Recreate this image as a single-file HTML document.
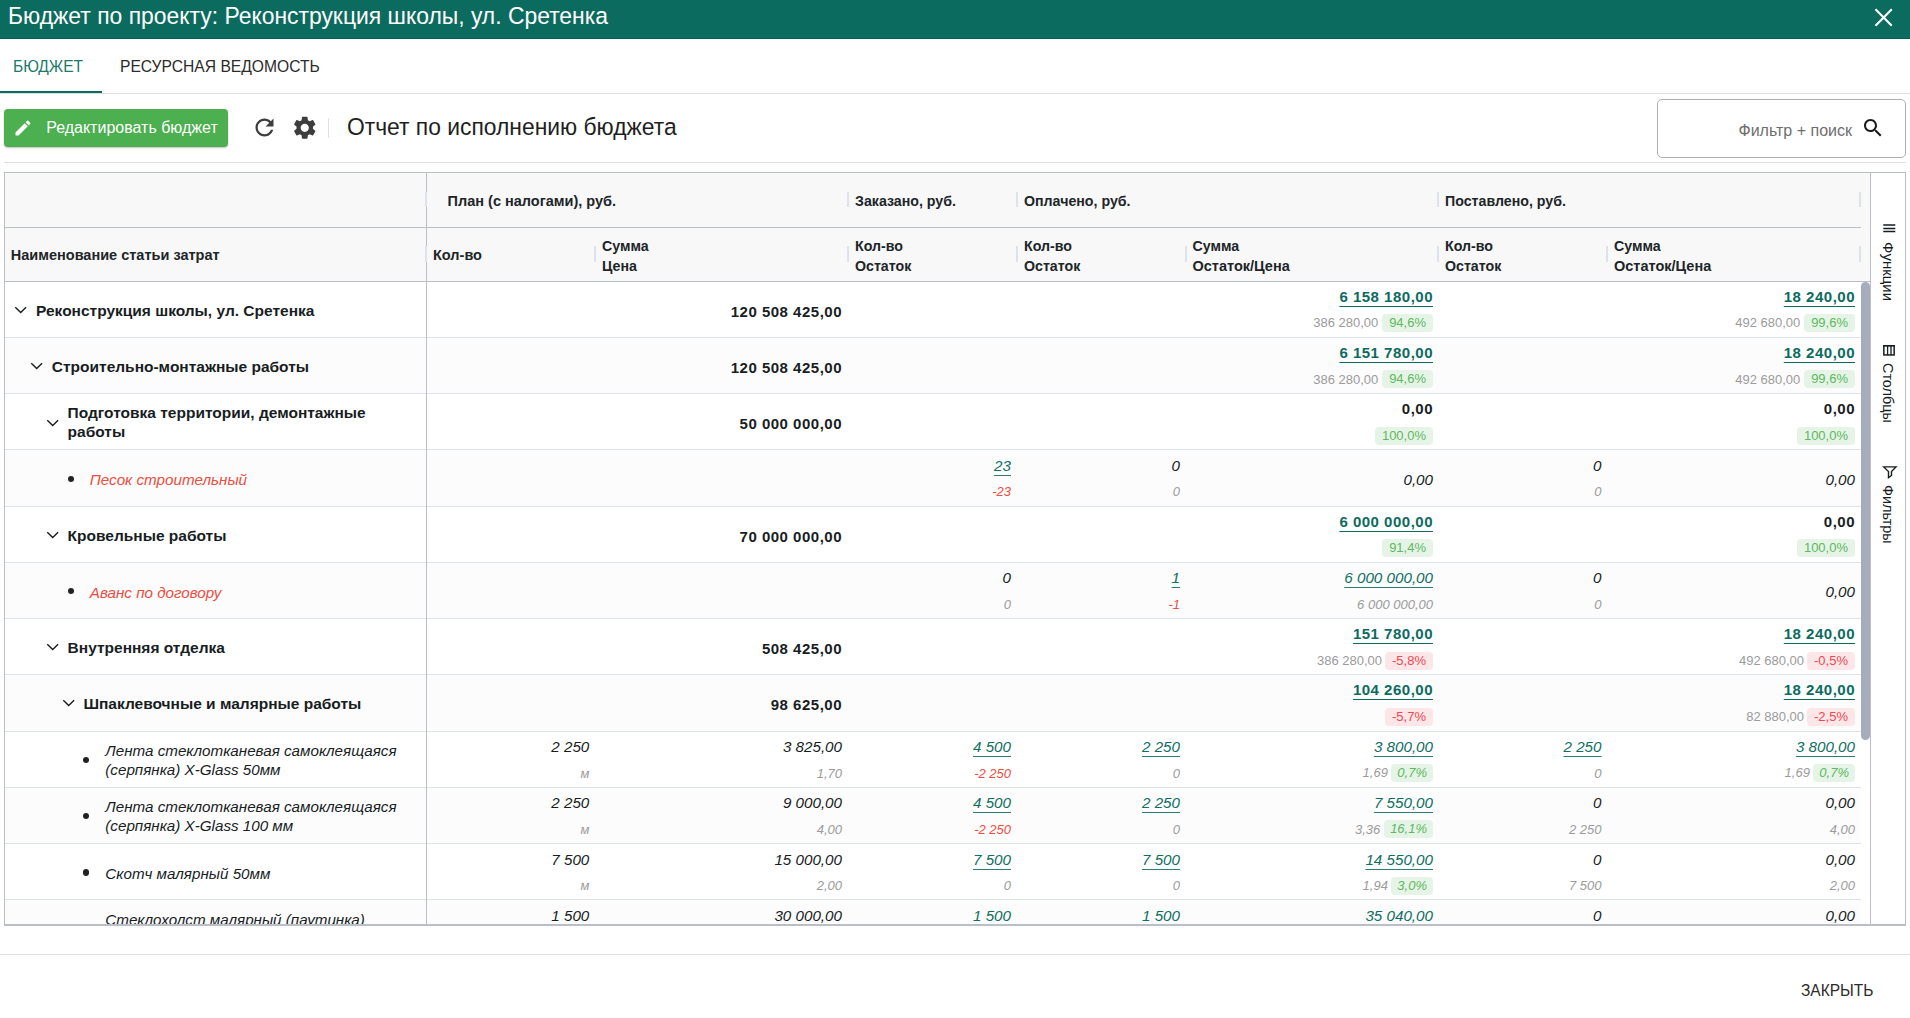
<!DOCTYPE html>
<html><head><meta charset="utf-8"><style>
html,body{margin:0;padding:0;background:#fff;width:1910px;height:1018px;overflow:hidden;position:relative;font-family:"Liberation Sans", sans-serif}
body>div,#tbl>div{position:absolute}
.t{white-space:nowrap}
</style></head><body>
<div style="left:0px;top:0px;width:1910px;height:38px;background:#0c6b5f"></div>
<div style="left:0px;top:38px;width:1910px;height:1px;background:#045f53"></div>
<div class="t" style="left:8px;top:1.48px;font-size:24.3px;line-height:30px;color:#fff;transform:scaleX(0.942);transform-origin:0 0">Бюджет по проекту: Реконструкция школы, ул. Сретенка</div>
<svg style="position:absolute;left:1872px;top:6px" width="23" height="23" viewBox="0 0 23 23"><path d="M3.5 3.2 L19.8 19.8 M19.8 3.2 L3.5 19.8" stroke="#fff" stroke-width="2.1" fill="none"/></svg>
<div class="t" style="left:13.2px;top:56.28px;font-size:16.5px;line-height:20px;color:#1b7a6c;transform:scaleX(0.943);transform-origin:0 0">БЮДЖЕТ</div>
<div class="t" style="left:119.5px;top:56.28px;font-size:16.5px;line-height:20px;color:#2b2b2b;transform:scaleX(0.947);transform-origin:0 0">РЕСУРСНАЯ ВЕДОМОСТЬ</div>
<div style="left:0px;top:93px;width:1910px;height:1px;background:#e0e0e0"></div>
<div style="left:0px;top:91px;width:102px;height:2px;background:#0c6b5f"></div>
<div style="left:4px;top:109px;width:224px;height:38px;background:#4caf50;border-radius:4px;box-shadow:0 1px 2px rgba(0,0,0,0.25)"></div>
<svg style="position:absolute;left:12.9px;top:117.6px" width="20" height="20" viewBox="0 0 24 24"><path fill="#fff" d="M3 17.25V21h3.75L17.81 9.94l-3.75-3.75L3 17.25zM20.71 7.04c.39-.39.39-1.02 0-1.41l-2.34-2.34c-.39-.39-1.02-.39-1.41 0l-1.83 1.83 3.75 3.75 1.83-1.83z"/></svg>
<div class="t" style="left:46.2px;top:118.26px;font-size:16px;line-height:20px;color:#fff">Редактировать бюджет</div>
<svg style="position:absolute;left:250.8px;top:113.6px" width="27" height="27" viewBox="0 0 24 24"><path fill="#3d3d3d" d="M17.65 6.35C16.2 4.9 14.21 4 12 4c-4.42 0-7.99 3.58-7.99 8s3.57 8 7.99 8c3.73 0 6.84-2.55 7.73-6h-2.08c-.82 2.33-3.04 4-5.65 4-3.31 0-6-2.69-6-6s2.69-6 6-6c1.66 0 3.14.69 4.22 1.78L13 11h7V4l-2.35 2.35z"/></svg>
<svg style="position:absolute;left:290.75px;top:113.65px" width="27.5" height="27.5" viewBox="0 0 24 24"><path fill="#3d3d3d" d="M19.14 12.94c.04-.3.06-.61.06-.94 0-.32-.02-.64-.07-.94l2.03-1.58c.18-.14.23-.41.12-.61l-1.92-3.32c-.12-.22-.37-.29-.59-.22l-2.39.96c-.5-.38-1.03-.7-1.62-.94l-.36-2.54c-.04-.24-.24-.41-.48-.41h-3.84c-.24 0-.43.17-.47.41l-.36 2.54c-.59.24-1.13.57-1.62.94l-2.39-.96c-.22-.08-.47 0-.59.22L2.74 8.87c-.12.21-.08.47.12.61l2.03 1.58c-.05.3-.09.63-.09.94s.02.64.07.94l-2.03 1.58c-.18.14-.23.41-.12.61l1.92 3.32c.12.22.37.29.59.22l2.39-.96c.5.38 1.03.7 1.62.94l.36 2.54c.05.24.24.41.48.41h3.84c.24 0 .44-.17.47-.41l.36-2.54c.59-.24 1.13-.56 1.62-.94l2.39.96c.22.08.47 0 .59-.22l1.92-3.32c.12-.22.07-.47-.12-.61l-2.01-1.58zM12 15.6c-1.98 0-3.6-1.62-3.6-3.6s1.62-3.6 3.6-3.6 3.6 1.62 3.6 3.6-1.62 3.6-3.6 3.6z"/></svg>
<div style="left:328px;top:118px;width:1px;height:20px;background:#e0e0e0"></div>
<div class="t" style="left:347px;top:111.88px;font-size:24.3px;line-height:30px;color:#1f1f1f;transform:scaleX(0.94);transform-origin:0 0">Отчет по исполнению бюджета</div>
<div style="left:1657px;top:99px;width:247px;height:57px;border:1px solid #b0b0b0;border-radius:5px;background:#fff"></div>
<div class="t" style="right:58px;top:121.26px;font-size:16px;line-height:20px;text-align:right;color:#6e6e6e">Фильтр + поиск</div>
<svg style="position:absolute;left:1861px;top:116px" width="24" height="24" viewBox="0 0 24 24"><path fill="#1a1a1a" d="M15.5 14h-.79l-.28-.27C15.41 12.59 16 11.11 16 9.5 16 5.91 13.09 3 9.5 3S3 5.91 3 9.5 5.91 16 9.5 16c1.61 0 3.09-.59 4.23-1.57l.27.28v.79l5 4.99L20.49 19l-4.99-5zm-6 0C7.01 14 5 11.99 5 9.5S7.01 5 9.5 5 14 7.01 14 9.5 11.99 14 9.5 14z"/></svg>
<div style="left:4px;top:162px;width:1902px;height:1px;background:#e0e0e0"></div>
<div style="left:4px;top:172px;width:1902px;height:754px;background:#fff"></div>
<div style="left:4px;top:172px;width:1866px;height:109px;background:#f8f8f8"></div>
<div style="left:5px;top:281.50px;width:1856px;height:56.25px;background:#ffffff"></div>
<div style="left:5px;top:336.75px;width:1856px;height:1px;background:#dde2eb"></div>
<div style="left:5px;top:337.75px;width:1856px;height:56.25px;background:#fcfcfc"></div>
<div style="left:5px;top:393.00px;width:1856px;height:1px;background:#dde2eb"></div>
<div style="left:5px;top:394.00px;width:1856px;height:56.25px;background:#ffffff"></div>
<div style="left:5px;top:449.25px;width:1856px;height:1px;background:#dde2eb"></div>
<div style="left:5px;top:450.25px;width:1856px;height:56.25px;background:#fcfcfc"></div>
<div style="left:5px;top:505.50px;width:1856px;height:1px;background:#dde2eb"></div>
<div style="left:5px;top:506.50px;width:1856px;height:56.25px;background:#ffffff"></div>
<div style="left:5px;top:561.75px;width:1856px;height:1px;background:#dde2eb"></div>
<div style="left:5px;top:562.75px;width:1856px;height:56.25px;background:#fcfcfc"></div>
<div style="left:5px;top:618.00px;width:1856px;height:1px;background:#dde2eb"></div>
<div style="left:5px;top:619.00px;width:1856px;height:56.25px;background:#ffffff"></div>
<div style="left:5px;top:674.25px;width:1856px;height:1px;background:#dde2eb"></div>
<div style="left:5px;top:675.25px;width:1856px;height:56.25px;background:#fcfcfc"></div>
<div style="left:5px;top:730.50px;width:1856px;height:1px;background:#dde2eb"></div>
<div style="left:5px;top:731.50px;width:1856px;height:56.25px;background:#ffffff"></div>
<div style="left:5px;top:786.75px;width:1856px;height:1px;background:#dde2eb"></div>
<div style="left:5px;top:787.75px;width:1856px;height:56.25px;background:#fcfcfc"></div>
<div style="left:5px;top:843.00px;width:1856px;height:1px;background:#dde2eb"></div>
<div style="left:5px;top:844.00px;width:1856px;height:56.25px;background:#ffffff"></div>
<div style="left:5px;top:899.25px;width:1856px;height:1px;background:#dde2eb"></div>
<div style="left:5px;top:900.25px;width:1856px;height:23.75px;background:#fcfcfc"></div>
<div style="left:4px;top:227px;width:1857px;height:1px;background:#babfc7"></div>
<div style="left:4px;top:281px;width:1866px;height:1px;background:#babfc7"></div>
<div style="left:426px;top:172px;width:1px;height:754px;background:#babfc7"></div>
<div style="left:4px;top:172px;width:1902px;height:1px;background:#babfc7"></div>
<div style="left:4px;top:172px;width:1px;height:754px;background:#babfc7"></div>
<div style="left:1905px;top:172px;width:1px;height:754px;background:#babfc7"></div>
<div style="left:4px;top:924px;width:1902px;height:2px;background:#babfc7"></div>
<div style="left:1870px;top:172px;width:1px;height:754px;background:#babfc7"></div>
<div style="left:1861px;top:282px;width:9px;height:458px;background:#a5adbd;border-radius:5px 5px 5px 5px"></div>
<div style="left:424.5px;top:192px;width:2px;height:15px;background:#dde2eb"></div>
<div style="left:847px;top:192px;width:2px;height:15px;background:#dde2eb"></div>
<div style="left:1016px;top:192px;width:2px;height:15px;background:#dde2eb"></div>
<div style="left:1437px;top:192px;width:2px;height:15px;background:#dde2eb"></div>
<div style="left:1859px;top:192px;width:2px;height:15px;background:#dde2eb"></div>
<div style="left:424.5px;top:246px;width:2px;height:16px;background:#dde2eb"></div>
<div style="left:594px;top:246px;width:2px;height:16px;background:#dde2eb"></div>
<div style="left:847px;top:246px;width:2px;height:16px;background:#dde2eb"></div>
<div style="left:1016px;top:246px;width:2px;height:16px;background:#dde2eb"></div>
<div style="left:1185px;top:246px;width:2px;height:16px;background:#dde2eb"></div>
<div style="left:1437px;top:246px;width:2px;height:16px;background:#dde2eb"></div>
<div style="left:1606px;top:246px;width:2px;height:16px;background:#dde2eb"></div>
<div style="left:1859px;top:246px;width:2px;height:16px;background:#dde2eb"></div>
<div class="t" style="left:447.6px;top:190.88px;font-size:14.5px;line-height:20px;font-weight:bold;color:#202528">План (с налогами), руб.</div>
<div class="t" style="left:855px;top:190.98px;font-size:14.2px;line-height:20px;font-weight:bold;color:#202528">Заказано, руб.</div>
<div class="t" style="left:1024px;top:190.98px;font-size:14.2px;line-height:20px;font-weight:bold;color:#202528">Оплачено, руб.</div>
<div class="t" style="left:1445px;top:190.98px;font-size:14.2px;line-height:20px;font-weight:bold;color:#202528">Поставлено, руб.</div>
<div class="t" style="left:10.8px;top:244.78px;font-size:14.5px;line-height:20px;font-weight:bold;color:#202528">Наименование статьи затрат</div>
<div class="t" style="left:433px;top:244.58px;font-size:14.5px;line-height:20px;font-weight:bold;color:#202528">Кол-во</div>
<div class="t" style="left:602px;top:235.68px;font-size:14.2px;line-height:20px;font-weight:bold;color:#202528">Сумма</div>
<div class="t" style="left:602px;top:255.68px;font-size:14.2px;line-height:20px;font-weight:bold;color:#202528">Цена</div>
<div class="t" style="left:855px;top:235.68px;font-size:14.2px;line-height:20px;font-weight:bold;color:#202528">Кол-во</div>
<div class="t" style="left:855px;top:255.68px;font-size:14.2px;line-height:20px;font-weight:bold;color:#202528">Остаток</div>
<div class="t" style="left:1024px;top:235.68px;font-size:14.2px;line-height:20px;font-weight:bold;color:#202528">Кол-во</div>
<div class="t" style="left:1024px;top:255.68px;font-size:14.2px;line-height:20px;font-weight:bold;color:#202528">Остаток</div>
<div class="t" style="left:1192.5px;top:235.68px;font-size:14.2px;line-height:20px;font-weight:bold;color:#202528">Сумма</div>
<div class="t" style="left:1192.5px;top:255.58px;font-size:14.5px;line-height:20px;font-weight:bold;color:#202528">Остаток/Цена</div>
<div class="t" style="left:1445px;top:235.68px;font-size:14.2px;line-height:20px;font-weight:bold;color:#202528">Кол-во</div>
<div class="t" style="left:1445px;top:255.68px;font-size:14.2px;line-height:20px;font-weight:bold;color:#202528">Остаток</div>
<div class="t" style="left:1614px;top:235.68px;font-size:14.2px;line-height:20px;font-weight:bold;color:#202528">Сумма</div>
<div class="t" style="left:1614px;top:255.58px;font-size:14.5px;line-height:20px;font-weight:bold;color:#202528">Остаток/Цена</div>
<div class="t" style="left:1876px;top:242px;writing-mode:vertical-rl;font-size:15px;line-height:24px;color:#181d1f">Функции</div>
<svg style="position:absolute;left:1882px;top:222px" width="14" height="12" viewBox="0 0 14 12"><path d="M1.3 3H13.3M1.3 6.5H13.3M1.3 9.6H13.3" stroke="#181d1f" stroke-width="1.5"/></svg>
<div class="t" style="left:1876px;top:363px;writing-mode:vertical-rl;font-size:14.4px;line-height:24px;color:#181d1f">Столбцы</div>
<svg style="position:absolute;left:1882px;top:344px" width="14" height="13" viewBox="0 0 14 13"><rect x="1.85" y="1.85" width="10.3" height="9.1" fill="none" stroke="#181d1f" stroke-width="1.5"/><path d="M1.1 1.6H12.9" stroke="#181d1f" stroke-width="1"/><path d="M5.6 2V11M9 2V11" stroke="#181d1f" stroke-width="1.3"/></svg>
<div class="t" style="left:1876px;top:485px;writing-mode:vertical-rl;font-size:14.4px;line-height:24px;color:#181d1f">Фильтры</div>
<svg style="position:absolute;left:1882px;top:465px" width="16" height="14" viewBox="0 0 16 14"><path d="M1.6 1.9 L14 1.9 L9.5 6.5 L9.5 10.5 L6.5 12.6 L6.5 6.5 Z" fill="none" stroke="#181d1f" stroke-width="1.4" stroke-linejoin="miter"/></svg>
<div style="left:0px;top:954px;width:1910px;height:1px;background:#e0e0e0"></div>
<div class="t" style="left:1801px;top:981.36px;font-size:16px;line-height:20px;color:#2b2b2b;transform:scaleX(0.97);transform-origin:0 0">ЗАКРЫТЬ</div>
<svg style="position:absolute;left:14.3px;top:304.50px" width="14" height="10" viewBox="0 0 14 10"><path d="M1.3 2.2 L6.7 7.6 L12.1 2.2" stroke="#181d1f" stroke-width="1.4" fill="none"/></svg>
<div class="t" style="left:36.0px;top:300.73px;font-size:15.5px;line-height:20px;font-weight:bold;color:#181d1f">Реконструкция школы, ул. Сретенка</div>
<div class="t" style="right:1068px;top:301.60px;font-size:15px;line-height:20px;text-align:right;font-weight:bold;letter-spacing:0.5px;color:#181d1f">120 508 425,00</div>
<div class="t" style="right:477px;top:286.70px;font-size:15px;line-height:20px;text-align:right;font-weight:bold;letter-spacing:0.5px;"><span style="color:#0c6b5f;text-decoration:underline;text-decoration-color:#0c6b5f;text-underline-offset:4px;text-decoration-thickness:1px">6 158 180,00</span></div>
<div class="t" style="right:477px;top:314.00px;height:18px;line-height:18px;padding:0 7px;border-radius:4px;background:#e6f4e7;color:#5db860;font-size:13px;">94,6%</div>
<div class="t" style="right:531.7px;top:313.30px;font-size:13px;line-height:20px;text-align:right;color:#9b9b9b">386 280,00</div>
<div class="t" style="right:55px;top:286.70px;font-size:15px;line-height:20px;text-align:right;font-weight:bold;letter-spacing:0.5px;"><span style="color:#0c6b5f;text-decoration:underline;text-decoration-color:#0c6b5f;text-underline-offset:4px;text-decoration-thickness:1px">18 240,00</span></div>
<div class="t" style="right:55px;top:314.00px;height:18px;line-height:18px;padding:0 7px;border-radius:4px;background:#e6f4e7;color:#5db860;font-size:13px;">99,6%</div>
<div class="t" style="right:109.70000000000005px;top:313.30px;font-size:13px;line-height:20px;text-align:right;color:#9b9b9b">492 680,00</div>
<svg style="position:absolute;left:30.3px;top:360.75px" width="14" height="10" viewBox="0 0 14 10"><path d="M1.3 2.2 L6.7 7.6 L12.1 2.2" stroke="#181d1f" stroke-width="1.4" fill="none"/></svg>
<div class="t" style="left:51.8px;top:356.98px;font-size:15.5px;line-height:20px;font-weight:bold;color:#181d1f">Строительно-монтажные работы</div>
<div class="t" style="right:1068px;top:357.85px;font-size:15px;line-height:20px;text-align:right;font-weight:bold;letter-spacing:0.5px;color:#181d1f">120 508 425,00</div>
<div class="t" style="right:477px;top:342.95px;font-size:15px;line-height:20px;text-align:right;font-weight:bold;letter-spacing:0.5px;"><span style="color:#0c6b5f;text-decoration:underline;text-decoration-color:#0c6b5f;text-underline-offset:4px;text-decoration-thickness:1px">6 151 780,00</span></div>
<div class="t" style="right:477px;top:370.25px;height:18px;line-height:18px;padding:0 7px;border-radius:4px;background:#e6f4e7;color:#5db860;font-size:13px;">94,6%</div>
<div class="t" style="right:531.7px;top:369.55px;font-size:13px;line-height:20px;text-align:right;color:#9b9b9b">386 280,00</div>
<div class="t" style="right:55px;top:342.95px;font-size:15px;line-height:20px;text-align:right;font-weight:bold;letter-spacing:0.5px;"><span style="color:#0c6b5f;text-decoration:underline;text-decoration-color:#0c6b5f;text-underline-offset:4px;text-decoration-thickness:1px">18 240,00</span></div>
<div class="t" style="right:55px;top:370.25px;height:18px;line-height:18px;padding:0 7px;border-radius:4px;background:#e6f4e7;color:#5db860;font-size:13px;">99,6%</div>
<div class="t" style="right:109.70000000000005px;top:369.55px;font-size:13px;line-height:20px;text-align:right;color:#9b9b9b">492 680,00</div>
<svg style="position:absolute;left:46.3px;top:417.80px" width="14" height="10" viewBox="0 0 14 10"><path d="M1.3 2.2 L6.7 7.6 L12.1 2.2" stroke="#181d1f" stroke-width="1.4" fill="none"/></svg>
<div class="t" style="left:67.6px;top:403.23px;font-size:15.5px;line-height:20px;font-weight:bold;color:#181d1f">Подготовка территории, демонтажные</div>
<div class="t" style="left:67.6px;top:422.13px;font-size:15.5px;line-height:20px;font-weight:bold;color:#181d1f">работы</div>
<div class="t" style="right:1068px;top:414.10px;font-size:15px;line-height:20px;text-align:right;font-weight:bold;letter-spacing:0.5px;color:#181d1f">50 000 000,00</div>
<div class="t" style="right:477px;top:399.20px;font-size:15px;line-height:20px;text-align:right;font-weight:bold;letter-spacing:0.5px;color:#181d1f">0,00</div>
<div class="t" style="right:477px;top:426.50px;height:18px;line-height:18px;padding:0 7px;border-radius:4px;background:#e6f4e7;color:#5db860;font-size:13px;">100,0%</div>
<div class="t" style="right:55px;top:399.20px;font-size:15px;line-height:20px;text-align:right;font-weight:bold;letter-spacing:0.5px;color:#181d1f">0,00</div>
<div class="t" style="right:55px;top:426.50px;height:18px;line-height:18px;padding:0 7px;border-radius:4px;background:#e6f4e7;color:#5db860;font-size:13px;">100,0%</div>
<div style="left:67.50px;top:475.55px;width:6.4px;height:6.4px;border-radius:50%;background:#222"></div>
<div class="t" style="left:89.8px;top:470.08px;font-size:15.2px;line-height:20px;font-style:italic;color:#ee4c40">Песок строительный</div>
<div class="t" style="right:899px;top:455.78px;font-size:15.2px;line-height:20px;text-align:right;font-style:italic"><span style="color:#0f6f63;text-decoration:underline;text-decoration-color:#2a7d72;text-underline-offset:4px;text-decoration-thickness:1px">23</span></div>
<div class="t" style="right:899px;top:482.35px;font-size:13px;line-height:20px;text-align:right;font-style:italic;color:#ee4c40">-23</div>
<div class="t" style="right:730px;top:455.78px;font-size:15.2px;line-height:20px;text-align:right;font-style:italic;color:#181d1f">0</div>
<div class="t" style="right:730px;top:482.35px;font-size:13px;line-height:20px;text-align:right;font-style:italic;color:#9b9b9b">0</div>
<div class="t" style="right:477px;top:469.58px;font-size:15.2px;line-height:20px;text-align:right;font-style:italic;color:#181d1f">0,00</div>
<div class="t" style="right:308.5px;top:455.78px;font-size:15.2px;line-height:20px;text-align:right;font-style:italic;color:#181d1f">0</div>
<div class="t" style="right:308.5px;top:482.35px;font-size:13px;line-height:20px;text-align:right;font-style:italic;color:#9b9b9b">0</div>
<div class="t" style="right:55px;top:469.58px;font-size:15.2px;line-height:20px;text-align:right;font-style:italic;color:#181d1f">0,00</div>
<svg style="position:absolute;left:46.3px;top:529.50px" width="14" height="10" viewBox="0 0 14 10"><path d="M1.3 2.2 L6.7 7.6 L12.1 2.2" stroke="#181d1f" stroke-width="1.4" fill="none"/></svg>
<div class="t" style="left:67.6px;top:525.73px;font-size:15.5px;line-height:20px;font-weight:bold;color:#181d1f">Кровельные работы</div>
<div class="t" style="right:1068px;top:526.60px;font-size:15px;line-height:20px;text-align:right;font-weight:bold;letter-spacing:0.5px;color:#181d1f">70 000 000,00</div>
<div class="t" style="right:477px;top:511.70px;font-size:15px;line-height:20px;text-align:right;font-weight:bold;letter-spacing:0.5px;"><span style="color:#0c6b5f;text-decoration:underline;text-decoration-color:#0c6b5f;text-underline-offset:4px;text-decoration-thickness:1px">6 000 000,00</span></div>
<div class="t" style="right:477px;top:539.00px;height:18px;line-height:18px;padding:0 7px;border-radius:4px;background:#e6f4e7;color:#5db860;font-size:13px;">91,4%</div>
<div class="t" style="right:55px;top:511.70px;font-size:15px;line-height:20px;text-align:right;font-weight:bold;letter-spacing:0.5px;color:#181d1f">0,00</div>
<div class="t" style="right:55px;top:539.00px;height:18px;line-height:18px;padding:0 7px;border-radius:4px;background:#e6f4e7;color:#5db860;font-size:13px;">100,0%</div>
<div style="left:67.50px;top:588.05px;width:6.4px;height:6.4px;border-radius:50%;background:#222"></div>
<div class="t" style="left:89.8px;top:582.58px;font-size:15.2px;line-height:20px;font-style:italic;color:#ee4c40">Аванс по договору</div>
<div class="t" style="right:899px;top:568.28px;font-size:15.2px;line-height:20px;text-align:right;font-style:italic;color:#181d1f">0</div>
<div class="t" style="right:899px;top:594.85px;font-size:13px;line-height:20px;text-align:right;font-style:italic;color:#9b9b9b">0</div>
<div class="t" style="right:730px;top:568.28px;font-size:15.2px;line-height:20px;text-align:right;font-style:italic"><span style="color:#0f6f63;text-decoration:underline;text-decoration-color:#2a7d72;text-underline-offset:4px;text-decoration-thickness:1px">1</span></div>
<div class="t" style="right:730px;top:594.85px;font-size:13px;line-height:20px;text-align:right;font-style:italic;color:#ee4c40">-1</div>
<div class="t" style="right:477px;top:568.28px;font-size:15.2px;line-height:20px;text-align:right;font-style:italic"><span style="color:#0f6f63;text-decoration:underline;text-decoration-color:#2a7d72;text-underline-offset:4px;text-decoration-thickness:1px">6 000 000,00</span></div>
<div class="t" style="right:477px;top:594.85px;font-size:13px;line-height:20px;text-align:right;font-style:italic;color:#9b9b9b">6 000 000,00</div>
<div class="t" style="right:308.5px;top:568.28px;font-size:15.2px;line-height:20px;text-align:right;font-style:italic;color:#181d1f">0</div>
<div class="t" style="right:308.5px;top:594.85px;font-size:13px;line-height:20px;text-align:right;font-style:italic;color:#9b9b9b">0</div>
<div class="t" style="right:55px;top:582.08px;font-size:15.2px;line-height:20px;text-align:right;font-style:italic;color:#181d1f">0,00</div>
<svg style="position:absolute;left:46.3px;top:642.00px" width="14" height="10" viewBox="0 0 14 10"><path d="M1.3 2.2 L6.7 7.6 L12.1 2.2" stroke="#181d1f" stroke-width="1.4" fill="none"/></svg>
<div class="t" style="left:67.6px;top:638.23px;font-size:15.5px;line-height:20px;font-weight:bold;color:#181d1f">Внутренняя отделка</div>
<div class="t" style="right:1068px;top:639.10px;font-size:15px;line-height:20px;text-align:right;font-weight:bold;letter-spacing:0.5px;color:#181d1f">508 425,00</div>
<div class="t" style="right:477px;top:624.20px;font-size:15px;line-height:20px;text-align:right;font-weight:bold;letter-spacing:0.5px;"><span style="color:#0c6b5f;text-decoration:underline;text-decoration-color:#0c6b5f;text-underline-offset:4px;text-decoration-thickness:1px">151 780,00</span></div>
<div class="t" style="right:477px;top:651.50px;height:18px;line-height:18px;padding:0 7px;border-radius:4px;background:#fde6e8;color:#ee4a50;font-size:13px;">-5,8%</div>
<div class="t" style="right:528.0px;top:650.80px;font-size:13px;line-height:20px;text-align:right;color:#9b9b9b">386 280,00</div>
<div class="t" style="right:55px;top:624.20px;font-size:15px;line-height:20px;text-align:right;font-weight:bold;letter-spacing:0.5px;"><span style="color:#0c6b5f;text-decoration:underline;text-decoration-color:#0c6b5f;text-underline-offset:4px;text-decoration-thickness:1px">18 240,00</span></div>
<div class="t" style="right:55px;top:651.50px;height:18px;line-height:18px;padding:0 7px;border-radius:4px;background:#fde6e8;color:#ee4a50;font-size:13px;">-0,5%</div>
<div class="t" style="right:106.0px;top:650.80px;font-size:13px;line-height:20px;text-align:right;color:#9b9b9b">492 680,00</div>
<svg style="position:absolute;left:62.3px;top:698.25px" width="14" height="10" viewBox="0 0 14 10"><path d="M1.3 2.2 L6.7 7.6 L12.1 2.2" stroke="#181d1f" stroke-width="1.4" fill="none"/></svg>
<div class="t" style="left:83.4px;top:694.48px;font-size:15.5px;line-height:20px;font-weight:bold;color:#181d1f">Шпаклевочные и малярные работы</div>
<div class="t" style="right:1068px;top:695.35px;font-size:15px;line-height:20px;text-align:right;font-weight:bold;letter-spacing:0.5px;color:#181d1f">98 625,00</div>
<div class="t" style="right:477px;top:680.45px;font-size:15px;line-height:20px;text-align:right;font-weight:bold;letter-spacing:0.5px;"><span style="color:#0c6b5f;text-decoration:underline;text-decoration-color:#0c6b5f;text-underline-offset:4px;text-decoration-thickness:1px">104 260,00</span></div>
<div class="t" style="right:477px;top:707.75px;height:18px;line-height:18px;padding:0 7px;border-radius:4px;background:#fde6e8;color:#ee4a50;font-size:13px;">-5,7%</div>
<div class="t" style="right:55px;top:680.45px;font-size:15px;line-height:20px;text-align:right;font-weight:bold;letter-spacing:0.5px;"><span style="color:#0c6b5f;text-decoration:underline;text-decoration-color:#0c6b5f;text-underline-offset:4px;text-decoration-thickness:1px">18 240,00</span></div>
<div class="t" style="right:55px;top:707.75px;height:18px;line-height:18px;padding:0 7px;border-radius:4px;background:#fde6e8;color:#ee4a50;font-size:13px;">-2,5%</div>
<div class="t" style="right:106.0px;top:707.05px;font-size:13px;line-height:20px;text-align:right;color:#9b9b9b">82 880,00</div>
<div style="left:83.10px;top:756.80px;width:6.4px;height:6.4px;border-radius:50%;background:#222"></div>
<div class="t" style="left:105.3px;top:741.23px;font-size:15.2px;line-height:20px;font-style:italic;color:#181d1f">Лента стеклотканевая самоклеящаяся</div>
<div class="t" style="left:105.3px;top:760.13px;font-size:15.2px;line-height:20px;font-style:italic;color:#181d1f">(серпянка) X-Glass 50мм</div>
<div class="t" style="right:1320.7px;top:737.03px;font-size:15.2px;line-height:20px;text-align:right;font-style:italic;color:#181d1f">2 250</div>
<div class="t" style="right:1320.7px;top:763.60px;font-size:13px;line-height:20px;text-align:right;font-style:italic;color:#9b9b9b">м</div>
<div class="t" style="right:1068px;top:737.03px;font-size:15.2px;line-height:20px;text-align:right;font-style:italic;color:#181d1f">3 825,00</div>
<div class="t" style="right:1068px;top:763.60px;font-size:13px;line-height:20px;text-align:right;font-style:italic;color:#9b9b9b">1,70</div>
<div class="t" style="right:899px;top:737.03px;font-size:15.2px;line-height:20px;text-align:right;font-style:italic"><span style="color:#0f6f63;text-decoration:underline;text-decoration-color:#2a7d72;text-underline-offset:4px;text-decoration-thickness:1px">4 500</span></div>
<div class="t" style="right:899px;top:763.60px;font-size:13px;line-height:20px;text-align:right;font-style:italic;color:#ee4c40">-2 250</div>
<div class="t" style="right:730px;top:737.03px;font-size:15.2px;line-height:20px;text-align:right;font-style:italic"><span style="color:#0f6f63;text-decoration:underline;text-decoration-color:#2a7d72;text-underline-offset:4px;text-decoration-thickness:1px">2 250</span></div>
<div class="t" style="right:730px;top:763.60px;font-size:13px;line-height:20px;text-align:right;font-style:italic;color:#9b9b9b">0</div>
<div class="t" style="right:477px;top:737.03px;font-size:15.2px;line-height:20px;text-align:right;font-style:italic"><span style="color:#0f6f63;text-decoration:underline;text-decoration-color:#2a7d72;text-underline-offset:4px;text-decoration-thickness:1px">3 800,00</span></div>
<div class="t" style="right:477px;top:764.00px;height:18px;line-height:18px;padding:0 6px;border-radius:4px;background:#e6f4e7;color:#5db860;font-size:13px;font-style:italic;">0,7%</div>
<div class="t" style="right:522.0999999999999px;top:763.30px;font-size:13px;line-height:20px;text-align:right;font-style:italic;color:#9b9b9b">1,69</div>
<div class="t" style="right:308.5px;top:737.03px;font-size:15.2px;line-height:20px;text-align:right;font-style:italic"><span style="color:#0f6f63;text-decoration:underline;text-decoration-color:#2a7d72;text-underline-offset:4px;text-decoration-thickness:1px">2 250</span></div>
<div class="t" style="right:308.5px;top:763.60px;font-size:13px;line-height:20px;text-align:right;font-style:italic;color:#9b9b9b">0</div>
<div class="t" style="right:55px;top:737.03px;font-size:15.2px;line-height:20px;text-align:right;font-style:italic"><span style="color:#0f6f63;text-decoration:underline;text-decoration-color:#2a7d72;text-underline-offset:4px;text-decoration-thickness:1px">3 800,00</span></div>
<div class="t" style="right:55px;top:764.00px;height:18px;line-height:18px;padding:0 6px;border-radius:4px;background:#e6f4e7;color:#5db860;font-size:13px;font-style:italic;">0,7%</div>
<div class="t" style="right:100.09999999999991px;top:763.30px;font-size:13px;line-height:20px;text-align:right;font-style:italic;color:#9b9b9b">1,69</div>
<div style="left:83.10px;top:813.05px;width:6.4px;height:6.4px;border-radius:50%;background:#222"></div>
<div class="t" style="left:105.3px;top:797.48px;font-size:15.2px;line-height:20px;font-style:italic;color:#181d1f">Лента стеклотканевая самоклеящаяся</div>
<div class="t" style="left:105.3px;top:816.38px;font-size:15.2px;line-height:20px;font-style:italic;color:#181d1f">(серпянка) X-Glass 100 мм</div>
<div class="t" style="right:1320.7px;top:793.28px;font-size:15.2px;line-height:20px;text-align:right;font-style:italic;color:#181d1f">2 250</div>
<div class="t" style="right:1320.7px;top:819.85px;font-size:13px;line-height:20px;text-align:right;font-style:italic;color:#9b9b9b">м</div>
<div class="t" style="right:1068px;top:793.28px;font-size:15.2px;line-height:20px;text-align:right;font-style:italic;color:#181d1f">9 000,00</div>
<div class="t" style="right:1068px;top:819.85px;font-size:13px;line-height:20px;text-align:right;font-style:italic;color:#9b9b9b">4,00</div>
<div class="t" style="right:899px;top:793.28px;font-size:15.2px;line-height:20px;text-align:right;font-style:italic"><span style="color:#0f6f63;text-decoration:underline;text-decoration-color:#2a7d72;text-underline-offset:4px;text-decoration-thickness:1px">4 500</span></div>
<div class="t" style="right:899px;top:819.85px;font-size:13px;line-height:20px;text-align:right;font-style:italic;color:#ee4c40">-2 250</div>
<div class="t" style="right:730px;top:793.28px;font-size:15.2px;line-height:20px;text-align:right;font-style:italic"><span style="color:#0f6f63;text-decoration:underline;text-decoration-color:#2a7d72;text-underline-offset:4px;text-decoration-thickness:1px">2 250</span></div>
<div class="t" style="right:730px;top:819.85px;font-size:13px;line-height:20px;text-align:right;font-style:italic;color:#9b9b9b">0</div>
<div class="t" style="right:477px;top:793.28px;font-size:15.2px;line-height:20px;text-align:right;font-style:italic"><span style="color:#0f6f63;text-decoration:underline;text-decoration-color:#2a7d72;text-underline-offset:4px;text-decoration-thickness:1px">7 550,00</span></div>
<div class="t" style="right:477px;top:820.25px;height:18px;line-height:18px;padding:0 6px;border-radius:4px;background:#e6f4e7;color:#5db860;font-size:13px;font-style:italic;">16,1%</div>
<div class="t" style="right:529.7px;top:819.55px;font-size:13px;line-height:20px;text-align:right;font-style:italic;color:#9b9b9b">3,36</div>
<div class="t" style="right:308.5px;top:793.28px;font-size:15.2px;line-height:20px;text-align:right;font-style:italic;color:#181d1f">0</div>
<div class="t" style="right:308.5px;top:819.85px;font-size:13px;line-height:20px;text-align:right;font-style:italic;color:#9b9b9b">2 250</div>
<div class="t" style="right:55px;top:793.28px;font-size:15.2px;line-height:20px;text-align:right;font-style:italic;color:#181d1f">0,00</div>
<div class="t" style="right:55px;top:819.85px;font-size:13px;line-height:20px;text-align:right;font-style:italic;color:#9b9b9b">4,00</div>
<div style="left:83.10px;top:869.30px;width:6.4px;height:6.4px;border-radius:50%;background:#222"></div>
<div class="t" style="left:105.3px;top:863.83px;font-size:15.2px;line-height:20px;font-style:italic;color:#181d1f">Скотч малярный 50мм</div>
<div class="t" style="right:1320.7px;top:849.53px;font-size:15.2px;line-height:20px;text-align:right;font-style:italic;color:#181d1f">7 500</div>
<div class="t" style="right:1320.7px;top:876.10px;font-size:13px;line-height:20px;text-align:right;font-style:italic;color:#9b9b9b">м</div>
<div class="t" style="right:1068px;top:849.53px;font-size:15.2px;line-height:20px;text-align:right;font-style:italic;color:#181d1f">15 000,00</div>
<div class="t" style="right:1068px;top:876.10px;font-size:13px;line-height:20px;text-align:right;font-style:italic;color:#9b9b9b">2,00</div>
<div class="t" style="right:899px;top:849.53px;font-size:15.2px;line-height:20px;text-align:right;font-style:italic"><span style="color:#0f6f63;text-decoration:underline;text-decoration-color:#2a7d72;text-underline-offset:4px;text-decoration-thickness:1px">7 500</span></div>
<div class="t" style="right:899px;top:876.10px;font-size:13px;line-height:20px;text-align:right;font-style:italic;color:#9b9b9b">0</div>
<div class="t" style="right:730px;top:849.53px;font-size:15.2px;line-height:20px;text-align:right;font-style:italic"><span style="color:#0f6f63;text-decoration:underline;text-decoration-color:#2a7d72;text-underline-offset:4px;text-decoration-thickness:1px">7 500</span></div>
<div class="t" style="right:730px;top:876.10px;font-size:13px;line-height:20px;text-align:right;font-style:italic;color:#9b9b9b">0</div>
<div class="t" style="right:477px;top:849.53px;font-size:15.2px;line-height:20px;text-align:right;font-style:italic"><span style="color:#0f6f63;text-decoration:underline;text-decoration-color:#2a7d72;text-underline-offset:4px;text-decoration-thickness:1px">14 550,00</span></div>
<div class="t" style="right:477px;top:876.50px;height:18px;line-height:18px;padding:0 6px;border-radius:4px;background:#e6f4e7;color:#5db860;font-size:13px;font-style:italic;">3,0%</div>
<div class="t" style="right:522.0999999999999px;top:875.80px;font-size:13px;line-height:20px;text-align:right;font-style:italic;color:#9b9b9b">1,94</div>
<div class="t" style="right:308.5px;top:849.53px;font-size:15.2px;line-height:20px;text-align:right;font-style:italic;color:#181d1f">0</div>
<div class="t" style="right:308.5px;top:876.10px;font-size:13px;line-height:20px;text-align:right;font-style:italic;color:#9b9b9b">7 500</div>
<div class="t" style="right:55px;top:849.53px;font-size:15.2px;line-height:20px;text-align:right;font-style:italic;color:#181d1f">0,00</div>
<div class="t" style="right:55px;top:876.10px;font-size:13px;line-height:20px;text-align:right;font-style:italic;color:#9b9b9b">2,00</div>
<div style="left:83.10px;top:925.55px;width:6.4px;height:6.4px;border-radius:50%;background:#222"></div>
<div class="t" style="left:105.3px;top:909.98px;font-size:15.2px;line-height:20px;font-style:italic;color:#181d1f">Стеклохолст малярный (паутинка)</div>
<div class="t" style="left:105.3px;top:928.88px;font-size:15.2px;line-height:20px;font-style:italic;color:#181d1f">x</div>
<div class="t" style="right:1320.7px;top:905.78px;font-size:15.2px;line-height:20px;text-align:right;font-style:italic;color:#181d1f">1 500</div>
<div class="t" style="right:1068px;top:905.78px;font-size:15.2px;line-height:20px;text-align:right;font-style:italic;color:#181d1f">30 000,00</div>
<div class="t" style="right:899px;top:905.78px;font-size:15.2px;line-height:20px;text-align:right;font-style:italic"><span style="color:#0f6f63;text-decoration:underline;text-decoration-color:#2a7d72;text-underline-offset:4px;text-decoration-thickness:1px">1 500</span></div>
<div class="t" style="right:730px;top:905.78px;font-size:15.2px;line-height:20px;text-align:right;font-style:italic"><span style="color:#0f6f63;text-decoration:underline;text-decoration-color:#2a7d72;text-underline-offset:4px;text-decoration-thickness:1px">1 500</span></div>
<div class="t" style="right:477px;top:905.78px;font-size:15.2px;line-height:20px;text-align:right;font-style:italic"><span style="color:#0f6f63;text-decoration:underline;text-decoration-color:#2a7d72;text-underline-offset:4px;text-decoration-thickness:1px">35 040,00</span></div>
<div class="t" style="right:308.5px;top:905.78px;font-size:15.2px;line-height:20px;text-align:right;font-style:italic;color:#181d1f">0</div>
<div class="t" style="right:55px;top:905.78px;font-size:15.2px;line-height:20px;text-align:right;font-style:italic;color:#181d1f">0,00</div>
<div style="left:0px;top:926px;width:1910px;height:28px;background:#fff"></div>
<div style="left:4px;top:924px;width:1902px;height:2px;background:#babfc7"></div>
</body></html>
